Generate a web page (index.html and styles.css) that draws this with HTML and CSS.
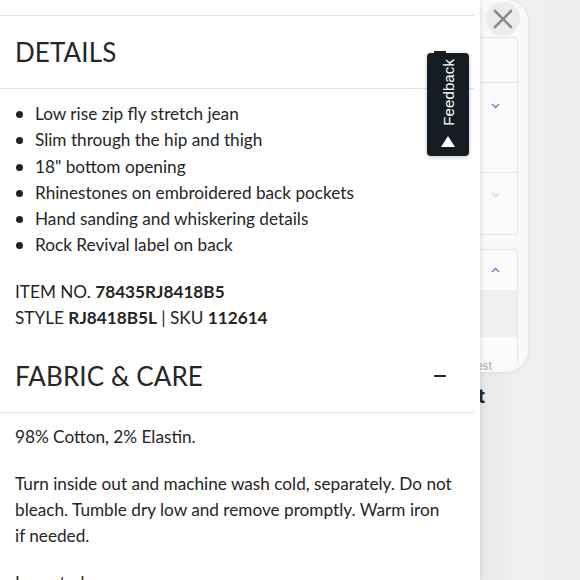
FILE: index.html
```html
<!DOCTYPE html>
<html>
<head>
<meta charset="utf-8">
<link rel="stylesheet" href="styles.css">
</head>
<body>
<div class="page">
  <main class="panel">
    <div class="inner">
      <div class="topline"></div>
      <div class="acc-head">
        <h2>DETAILS</h2>
        <span class="minus"></span>
      </div>
      <div class="acc-body details">
        <ul class="bullets">
          <li>Low rise zip fly stretch jean</li>
          <li>Slim through the hip and thigh</li>
          <li>18" bottom opening</li>
          <li>Rhinestones on embroidered back pockets</li>
          <li>Hand sanding and whiskering details</li>
          <li>Rock Revival label on back</li>
        </ul>
        <p class="meta">ITEM NO. <b>78435RJ8418B5</b><br>STYLE <b>RJ8418B5L</b> | SKU <b>112614</b></p>
      </div>
      <div class="acc-head">
        <h2>FABRIC &amp; CARE</h2>
        <span class="minus"></span>
      </div>
      <div class="acc-body care">
        <p>98% Cotton, 2% Elastin.</p>
        <p>Turn inside out and machine wash cold, separately. Do not bleach. Tumble dry low and remove promptly. Warm iron if&nbsp;needed.</p>
        <p>Imported.</p>
      </div>
    </div>
    <div class="feedback">
      <span class="fb-text">Feedback</span>
      <span class="fb-tri"></span>
    </div>
  </main>
  <aside class="side">
    <div class="card">
      <div class="close">
        <svg width="20" height="20" viewBox="0 0 20 20"><path d="M2 2 L18 18 M18 2 L2 18" stroke="#8c8c8c" stroke-width="2.6" stroke-linecap="round" fill="none"/></svg>
      </div>
      <div class="box box-a">
        <div class="box-row top"></div>
        <div class="box-row chev">
          <svg width="9" height="6" viewBox="0 0 9 6"><polyline points="1,1 4.5,4.5 8,1" fill="none" stroke="#7a6fd0" stroke-width="1.3"/></svg>
        </div>
      </div>
      <div class="box box-b">
        <svg width="9" height="6" viewBox="0 0 9 6"><polyline points="1,1 4.5,4.5 8,1" fill="none" stroke="#d6d6de" stroke-width="1.3"/></svg>
      </div>
      <div class="box box-c">
        <div class="c-head">
          <svg width="9" height="6" viewBox="0 0 9 6"><polyline points="1,5 4.5,1.5 8,5" fill="none" stroke="#7a6fd0" stroke-width="1.3"/></svg>
        </div>
        <div class="c-band"></div>
      </div>
      <span class="card-note">Latest</span>
    </div>
    <span class="side-title">Checkout</span>
  </aside>
</div>
</body>
</html>
```

FILE: styles.css
```css
* { box-sizing: border-box; }
html, body { margin: 0; padding: 0; }
body {
  width: 580px;
  height: 580px;
  overflow: hidden;
  background: #eeeeee;
  font-family: Lato, "Open Sans", sans-serif;
  color: #252525;
}
.page {
  display: flex;
  height: 580px;
}
.panel {
  position: relative;
  z-index: 2;
  width: 480px;
  height: 580px;
  background: #ffffff;
  box-shadow: 1px 0 5px rgba(0,0,0,0.10);
  flex: none;
}
.inner { width: 474px; }
.topline {
  height: 16px;
  border-bottom: 1px solid #e2e2e2;
}
.acc-head {
  height: 73px;
  display: flex;
  align-items: center;
  justify-content: space-between;
  padding: 0 28px 0 15px;
  border-bottom: 1px solid #e2e2e2;
}
.acc-head h2 {
  margin: 0;
  font-weight: 400;
  font-size: 26px;
  letter-spacing: 0.1px;
  color: #262626;
  line-height: 1;
}
.minus {
  width: 12px;
  height: 2px;
  background: #222;
}
.acc-body {
  padding: 0 15px;
  font-size: 17.2px;
  line-height: 26.3px;
}
.details { padding-top: 12px; padding-bottom: 9px; }
.bullets {
  list-style: none;
  margin: 0;
  padding: 0;
}
.bullets li {
  position: relative;
  padding-left: 20px;
}
.bullets li::before {
  content: "";
  position: absolute;
  left: 1px;
  top: 10px;
  width: 7px;
  height: 7px;
  border-radius: 50%;
  background: #222;
}
.meta { margin: 20px 0 0; }
.meta b { font-weight: 700; }
.care { padding-top: 11px; padding-right: 15px; }
.care p { margin: 0 0 20px; }

.feedback {
  position: absolute;
  left: 427px;
  top: 53px;
  width: 42px;
  height: 103px;
  background: #161c24;
  border-radius: 4px;
  box-shadow: 0 1px 4px rgba(0,0,0,0.25);
  display: flex;
  flex-direction: column;
  align-items: center;
  padding-top: 6px;
}
.fb-text {
  writing-mode: vertical-rl;
  transform: rotate(180deg);
  font-family: "Liberation Sans", Arial, sans-serif;
  font-size: 15px;
  color: #ffffff;
  line-height: 1;
  letter-spacing: 0.1px;
}
.fb-tri {
  margin-top: 10px;
  width: 0;
  height: 0;
  border-left: 7px solid transparent;
  border-right: 7px solid transparent;
  border-bottom: 11px solid #ffffff;
}

.side {
  position: relative;
  flex: 1;
  background: linear-gradient(90deg, #e9e9e9 0%, #f0f0f0 40%, #eeeeee 100%);
}
.card {
  position: relative;
  width: 48px;
  height: 372px;
  background: #f9f9f9;
  border-radius: 0 22px 22px 0;
  box-shadow: 1px 1px 4px rgba(0,0,0,0.06);
  padding-top: 2px;
  overflow: hidden;
}
.close {
  width: 34px;
  height: 34px;
  margin-left: 6px;
  border-radius: 50%;
  background: #ececec;
  display: flex;
  align-items: center;
  justify-content: center;
}
.box {
  width: 38px;
  background: #fafafa;
  border: 1px solid #e6e6e6;
  border-left: none;
}
.box-a {
  margin-top: 1px;
  height: 136px;
  border-radius: 0 4px 0 0;
}
.box-row.top {
  height: 45px;
  border-bottom: 1px solid #e6e6e6;
}
.box-row.chev {
  height: 45px;
  display: flex;
  align-items: center;
  justify-content: center;
  padding-right: 6px;
}
.box-b {
  height: 62px;
  border-top: none;
  display: flex;
  align-items: flex-start;
  justify-content: center;
  padding-top: 19px;
  padding-right: 6px;
  border-radius: 0 0 4px 0;
}
.box-c {
  margin-top: 14px;
  height: 114px;
  border-radius: 0 4px 0 0;
  border-bottom: none;
  background: #fbfbfb;
}
.c-head {
  height: 40px;
  display: flex;
  align-items: center;
  justify-content: center;
  padding-right: 6px;
}
.c-band {
  height: 47px;
  background: #f0f0f0;
}
.card-note {
  position: absolute;
  right: 36px;
  top: 359px;
  font-family: Inter, sans-serif;
  font-size: 11px;
  color: #a8a8a8;
  line-height: 14px;
}
.side-title {
  position: absolute;
  right: 95px;
  top: 384px;
  font-family: Inter, sans-serif;
  font-weight: 700;
  font-size: 20px;
  color: #2a2a2a;
  line-height: 24px;
}
```
